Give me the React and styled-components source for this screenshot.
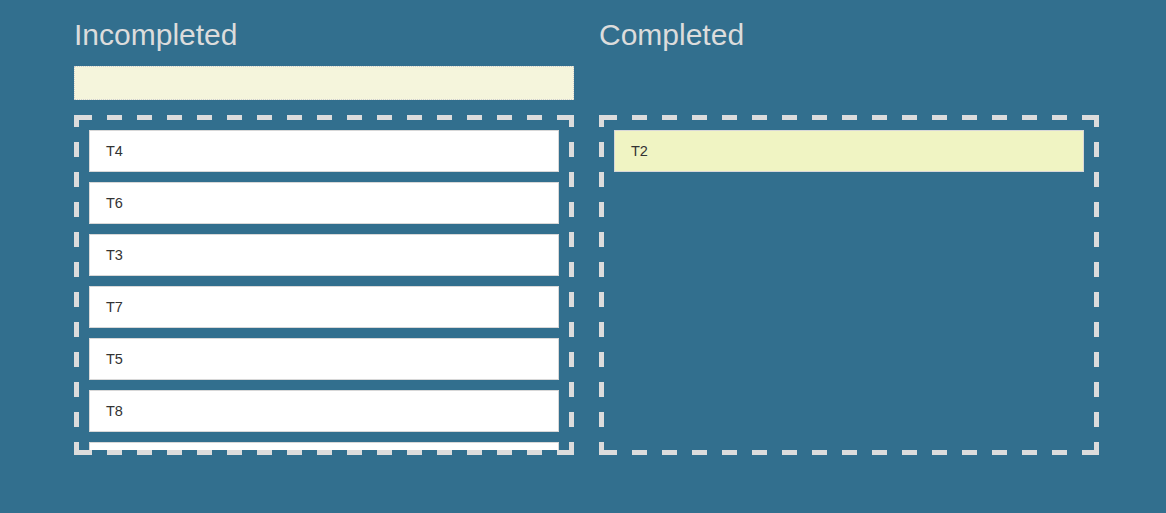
import React from "react";
import styled, { createGlobalStyle } from "styled-components";

const GlobalStyle = createGlobalStyle`
  html, body {
    margin: 0;
    padding: 0;
    background: #326f8e;
    font-family: "Liberation Sans", Arial, sans-serif;
  }
`;

const Board = styled.div`
  display: flex;
  gap: 25px;
  padding: 18px 0 0 74px;
`;

const Column = styled.section`
  width: 500px;
  display: flex;
  flex-direction: column;
`;

const Title = styled.h2`
  margin: 0;
  font-size: 30px;
  font-weight: normal;
  line-height: 34px;
  color: #dcdcdc;
`;

const NewTask = styled.input`
  box-sizing: border-box;
  margin-top: 14px;
  width: 100%;
  height: 34px;
  background: #f5f5dc;
  border: 1px dotted #d0d0d0;
  outline: none;
`;

const Spacer = styled.div`
  margin-top: 14px;
  height: 34px;
`;

// dashes drawn as gradients so the 15px dash / 15px gap rhythm matches
const dash = "#dcdcdc";

const DropZone = styled.div`
  box-sizing: border-box;
  margin-top: 15px;
  height: 340px;
  padding: 10px;
  border: 5px solid transparent;
  background:
    linear-gradient(to right, ${dash} 15px, transparent 15px) 3px 0 / 30px 5px repeat-x,
    linear-gradient(to right, ${dash} 15px, transparent 15px) 3px 100% / 30px 5px repeat-x,
    linear-gradient(to bottom, ${dash} 15px, transparent 15px) 0 -3px / 5px 30px repeat-y,
    linear-gradient(to bottom, ${dash} 15px, transparent 15px) 100% -3px / 5px 30px repeat-y;
  background-origin: border-box;
  overflow: hidden;
  display: flex;
  flex-direction: column;
  gap: 10px;
`;

const Task = styled.div`
  box-sizing: border-box;
  flex-shrink: 0;
  height: 42px;
  display: flex;
  align-items: center;
  padding: 0 16px;
  font-size: 14.5px;
  color: #333;
  background: ${(p) => (p.done ? "#f0f4c3" : "#ffffff")};
  border: 1px solid #d8d8d8;
`;

const incomplete = ["T4", "T6", "T3", "T7", "T5", "T8", "T1"];
const complete = ["T2"];

export default function App() {
  return (
    <>
      <GlobalStyle />
      <Board>
        <Column>
          <Title>Incompleted</Title>
          <NewTask type="text" />
          <DropZone>
            {incomplete.map((t) => (
              <Task key={t}>{t}</Task>
            ))}
          </DropZone>
        </Column>
        <Column>
          <Title>Completed</Title>
          <Spacer />
          <DropZone>
            {complete.map((t) => (
              <Task key={t} done>
                {t}
              </Task>
            ))}
          </DropZone>
        </Column>
      </Board>
    </>
  );
}
